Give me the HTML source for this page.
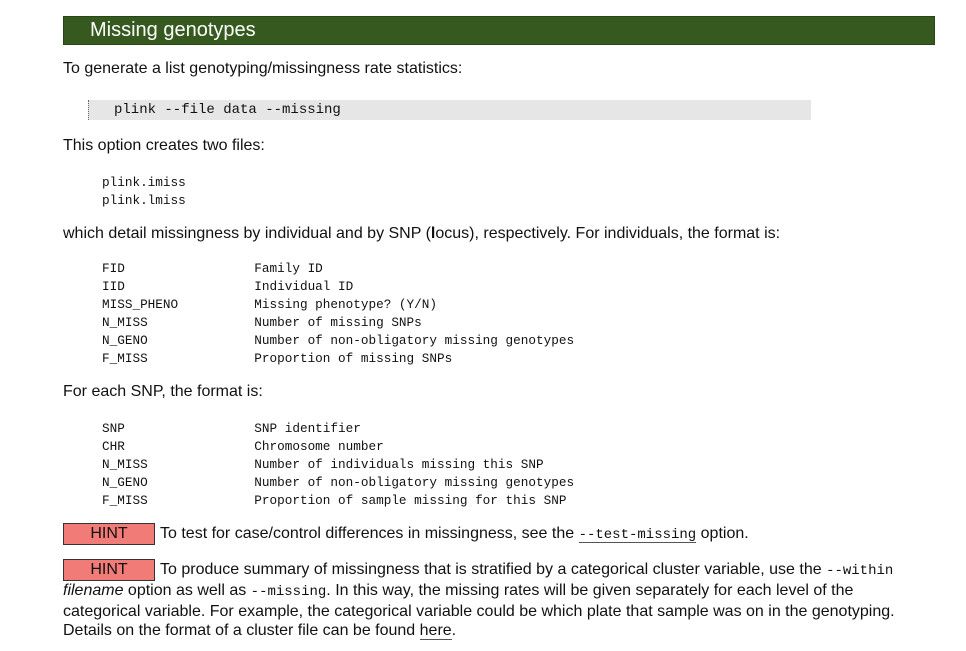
<!DOCTYPE html>
<html><head><meta charset="utf-8"><style>
body{margin:0;background:#fff;width:966px;height:651px;position:relative;font-family:"Liberation Sans",Arial,sans-serif;font-size:16px;color:#111;}
.a{position:absolute;left:63px;white-space:nowrap;}
.h{position:absolute;left:63px;top:16px;width:870px;height:27px;background:#35591f;border:1px solid #2a4418;color:#fff;font-size:20px;line-height:26px;}
.h span{margin-left:26px;}
pre{position:absolute;left:102px;margin:0;font-family:"Liberation Mono",monospace;font-size:12.7px;line-height:18px;color:#111;}
.code{position:absolute;left:88px;top:100px;width:722px;height:20px;background:#e6e6e6;border-left:1px dotted #666;font-family:"Liberation Mono",monospace;font-size:14px;line-height:20px;}
.code span{margin-left:25px;}
.hint{display:inline-block;width:90px;height:20px;background:#f07b77;border:1px solid #333;text-align:center;line-height:20px;margin-right:5px;vertical-align:middle;}
code{font-family:"Liberation Mono",monospace;font-size:14px;}
u{text-decoration:none;border-bottom:1px solid #555;}
</style></head><body>
<div class="h"><span>Missing genotypes</span></div>
<div class="a" style="top:60px">To generate a list genotyping/missingness rate statistics:</div>
<div class="code"><span>plink --file data --missing</span></div>
<div class="a" style="top:137px">This option creates two files:</div>
<pre style="top:174px">plink.imiss
plink.lmiss</pre>
<div class="a" style="top:225px">which detail missingness by individual and by SNP (<b>l</b>ocus), respectively. For individuals, the format is:</div>
<pre style="top:260px">FID                 Family ID
IID                 Individual ID
MISS_PHENO          Missing phenotype? (Y/N)
N_MISS              Number of missing SNPs
N_GENO              Number of non-obligatory missing genotypes
F_MISS              Proportion of missing SNPs</pre>
<div class="a" style="top:383px">For each SNP, the format is:</div>
<pre style="top:420px">SNP                 SNP identifier
CHR                 Chromosome number
N_MISS              Number of individuals missing this SNP
N_GENO              Number of non-obligatory missing genotypes
F_MISS              Proportion of sample missing for this SNP</pre>
<div class="a" style="top:523px"><span class="hint">HINT</span>To test for case/control differences in missingness, see the <u><code>--test-missing</code></u> option.</div>
<div class="a" style="top:559px;width:850px;white-space:normal;line-height:19px"><span class="hint">HINT</span>To produce summary of missingness that is stratified by a categorical cluster variable, use the <code>--within</code> <i>filename</i> option as well as <code>--missing</code>. In this way, the missing rates will be given separately for each level of the categorical variable. For example, the categorical variable could be which plate that sample was on in the genotyping. Details on the format of a cluster file can be found <u>here</u>.</div>
</body></html>
